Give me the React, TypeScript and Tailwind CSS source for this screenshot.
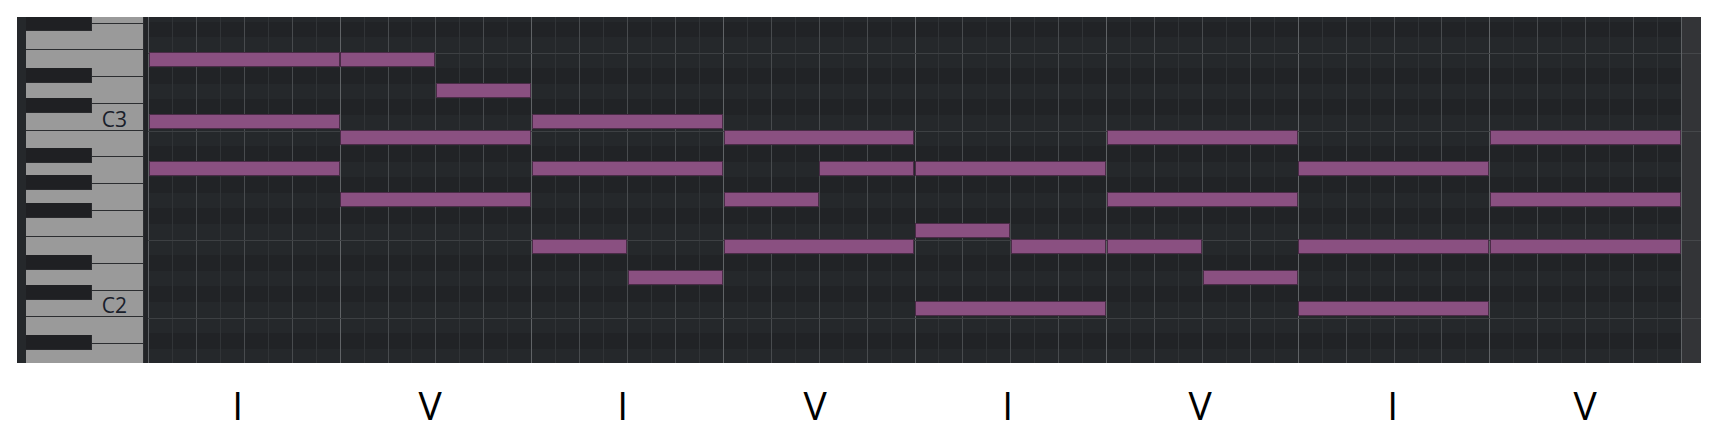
import React from "react";

const ROW_H = 15.583;
const ROW_OFFSET = -11.07;
const GRID_W = 1533;
const CELL = GRID_W / 64;
const BAR = GRID_W / 8;

// rows from top: G3 .. A1
const rowNames = [
  "G3", "F#3", "F3", "E3", "D#3", "D3", "C#3", "C3", "B2", "A#2", "A2", "G#2",
  "G2", "F#2", "F2", "E2", "D#2", "D2", "C#2", "C2", "B1", "A#1", "A1",
];

const R = { E3: 3, D3: 5, C3: 7, B2: 8, A2: 10, G2: 12, F2: 14, E2: 15, D2: 17, C2: 19 };

// [row, bar, startEighth, lengthEighths]
const notes: [number, number, number, number][] = [
  [R.E3, 0, 0, 8], [R.C3, 0, 0, 8], [R.A2, 0, 0, 8],
  [R.E3, 1, 0, 4], [R.D3, 1, 4, 4], [R.B2, 1, 0, 8], [R.G2, 1, 0, 8],
  [R.C3, 2, 0, 8], [R.A2, 2, 0, 8], [R.E2, 2, 0, 4], [R.D2, 2, 4, 4],
  [R.B2, 3, 0, 8], [R.A2, 3, 4, 4], [R.G2, 3, 0, 4], [R.E2, 3, 0, 8],
  [R.A2, 4, 0, 8], [R.F2, 4, 0, 4], [R.E2, 4, 4, 4], [R.C2, 4, 0, 8],
  [R.B2, 5, 0, 8], [R.G2, 5, 0, 8], [R.E2, 5, 0, 4], [R.D2, 5, 4, 4],
  [R.A2, 6, 0, 8], [R.E2, 6, 0, 8], [R.C2, 6, 0, 8],
  [R.B2, 7, 0, 8], [R.G2, 7, 0, 8], [R.E2, 7, 0, 8],
];

const whiteKeys = ["G3", "F3", "E3", "D3", "C3", "B2", "A2", "G2", "F2", "E2", "D2", "C2", "B1", "A1"];
const blackKeyTops = [-1, 50.9, 80.6, 130.9, 158.1, 186.1, 237.9, 267.6, 317.9];

const labels = ["I", "V", "I", "V", "I", "V", "I", "V"];

function Keyboard() {
  return (
    <div className="relative w-[117px] h-full overflow-hidden bg-[#9a9a9a]">
      <div className="flex flex-col mt-[-20px]">
        {whiteKeys.map((k) => (
          <div
            key={k}
            className="h-[26.714px] shrink-0 border-b border-[#2b2d30] bg-[#9a9a9a] flex items-end justify-end pr-[16px]"
          >
            {(k === "C3" || k === "C2") && (
              <span className="text-[21px] leading-[21px] text-[#19202a] font-['Open_Sans',sans-serif]">
                {k}
              </span>
            )}
          </div>
        ))}
      </div>
      {blackKeyTops.map((t, i) => (
        <div
          key={i}
          className="absolute left-0 w-[66px] h-[15px] bg-[#1f2023] border-r border-b border-[#2a2b2e]"
          style={{ top: t }}
        />
      ))}
    </div>
  );
}

function Grid() {
  const isBlack = (n: string) => n.includes("#");
  const hasLine = (n: string) => n.startsWith("E") || n.startsWith("B");
  return (
    <div className="relative w-[1533px] h-full overflow-hidden bg-[#242629]">
      {/* row backgrounds */}
      <div className="flex flex-col mt-[-11.07px]">
        {rowNames.map((n) => (
          <div
            key={n}
            className={
              "h-[15.583px] shrink-0 " + (isBlack(n) ? "bg-[#212326]" : "bg-[#25282b]")
            }
          />
        ))}
      </div>
      {/* vertical lines */}
      <div className="absolute inset-0 flex">
        {Array.from({ length: 64 }).map((_, j) => (
          <div
            key={j}
            className={
              "flex-1 h-full border-l " +
              (j % 8 === 0
                ? "border-[#606366]"
                : j % 2 === 0
                ? "border-[#484b4e]"
                : "border-[#313437]")
            }
          />
        ))}
      </div>
      {/* horizontal lines */}
      <div className="absolute inset-x-0 top-[-11.07px] flex flex-col">
        {rowNames.map((n) => (
          <div
            key={n}
            className={"h-[15.583px] shrink-0 " + (hasLine(n) ? "border-t border-[#3d4043]" : "")}
          />
        ))}
      </div>
      {/* notes */}
      {notes.map(([r, b, s, l], i) => (
        <div
          key={i}
          className="absolute h-[15px] bg-[#8a5081] border border-[#4a2b47]"
          style={{
            left: b * BAR + s * CELL + 0.7,
            width: l * CELL - 0.7,
            top: ROW_OFFSET + r * ROW_H - 1,
          }}
        />
      ))}
    </div>
  );
}

function Gutter() {
  const hasLine = (n: string) => n.startsWith("E") || n.startsWith("B");
  return (
    <div className="w-[20px] h-full overflow-hidden bg-[#333437] border-l border-[#606366]">
      <div className="flex flex-col mt-[-11.07px]">
        {rowNames.map((n) => (
          <div
            key={n}
            className={"h-[15.583px] shrink-0 " + (hasLine(n) ? "border-t border-[#45474a]" : "")}
          />
        ))}
      </div>
    </div>
  );
}

export default function App() {
  return (
    <div className="w-[1716px] h-[438px] bg-white overflow-hidden">
      <div className="pt-[17px] pl-[17px]">
        <div className="flex h-[346px] w-[1684px] bg-[#25282b]">
          <div className="w-[9px] h-full bg-[#25282b]" />
          <Keyboard />
          <div className="w-[5px] h-full bg-[#222427] border-l border-[#2c2e31]" />
          <Grid />
          <Gutter />
        </div>
      </div>
      <div className="ml-[141.5px] w-[1540px] mt-[22px] grid grid-cols-8 text-center">
        {labels.map((l, i) => (
          <div
            key={i}
            className="text-[39px] leading-[39px] text-black font-['Open_Sans',sans-serif]"
          >
            {l}
          </div>
        ))}
      </div>
    </div>
  );
}
